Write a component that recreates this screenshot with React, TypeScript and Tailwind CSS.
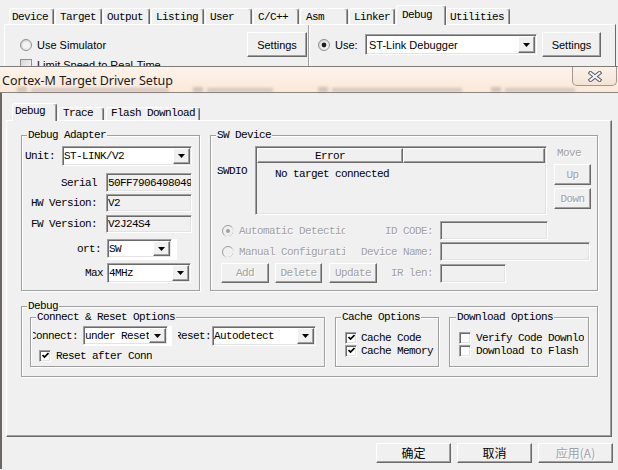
import React from 'react';

const mono = "font-['Liberation_Mono','DejaVu_Sans_Mono',monospace] text-[11px] tracking-[-0.6px] leading-[12px]";
const sans = "font-['Liberation_Sans',Arial,sans-serif] text-[11px] tracking-normal";
const cjk = "font-['Noto_Sans_CJK_SC','Noto_Sans_CJK_JP',sans-serif] text-[12px] tracking-normal leading-[16px]";

// classic 3D edges
const raised = 'border border-t-white border-l-white border-r-[#696969] border-b-[#696969] shadow-[inset_-1px_-1px_0_#a0a0a0]';
const sunken = 'border border-t-[#a0a0a0] border-l-[#a0a0a0] border-r-white border-b-white shadow-[inset_1px_1px_0_#696969,inset_-1px_-1px_0_#e3e3e3]';
const etched = 'border border-[#a0a0a0] shadow-[inset_1px_1px_0_#fff,1px_1px_0_#fff]';
const gray = 'text-[#a0a0a0] [text-shadow:1px_1px_0_#fff]';

function Group({ label, className = '', labelClass = 'ml-[5px]', children }: { label: string; className?: string; labelClass?: string; children?: React.ReactNode }) {
  return (
    <div className={`${etched} ${className}`}>
      <div className={`-mt-[7px] w-fit bg-[#f0f0f0] px-[1px] whitespace-nowrap ${labelClass}`}>{label}</div>
      {children}
    </div>
  );
}

function Arrow() {
  return (
    <svg width="7" height="4" viewBox="0 0 7 4">
      <path d="M0 0h7L3.5 4z" fill="#000" />
    </svg>
  );
}

function Combo({ value, className = '' }: { value: string; className?: string }) {
  return (
    <div className={`${sunken} bg-white p-[1px] flex items-stretch ${className}`}>
      <div className="flex-1 flex items-center overflow-hidden whitespace-nowrap">{value}</div>
      <div className={`${raised} bg-[#f0f0f0] w-[17px] flex items-center justify-center`}>
        <Arrow />
      </div>
    </div>
  );
}

function Field({ value = '', className = '' }: { value?: string; className?: string }) {
  return <div className={`${sunken} p-[1px] flex items-center overflow-hidden whitespace-nowrap ${className}`}>{value}</div>;
}

function Btn({ children, className = '', disabled }: { children: React.ReactNode; className?: string; disabled?: boolean }) {
  return (
    <div className={`${raised} bg-[#f0f0f0] flex items-center justify-center shrink-0 whitespace-nowrap ${disabled ? gray : ''} ${className}`}>
      {children}
    </div>
  );
}

function Check({ checked }: { checked?: boolean }) {
  return (
    <div className={`w-[12px] h-[12px] ${sunken} bg-white flex items-center justify-center shrink-0`}>
      {checked && (
        <svg width="7" height="7" viewBox="0 0 7 7">
          <path d="M0.5 3l2 2L6.5 1" stroke="#000" strokeWidth="1.7" fill="none" />
        </svg>
      )}
    </div>
  );
}

function Radio({ checked, disabled }: { checked?: boolean; disabled?: boolean }) {
  return (
    <svg width="12" height="12" viewBox="0 0 12 12" className="shrink-0">
      <circle cx="6" cy="6" r="5.5" fill={disabled ? '#f0f0f0' : '#fff'} stroke="#9a9a9a" />
      <path d="M10 2.5A5 5 0 0 1 2.5 10" stroke="#fff" fill="none" />
      {checked && <circle cx="6" cy="6" r="2" fill={disabled ? '#a0a0a0' : '#000'} />}
    </svg>
  );
}

function AeroRadio({ checked }: { checked?: boolean }) {
  return (
    <svg width="12" height="12" viewBox="0 0 12 12" className="shrink-0">
      <defs>
        <linearGradient id="aero" x1="0" y1="0" x2="1" y2="1">
          <stop offset="0" stopColor="#c9c9c9" />
          <stop offset="1" stopColor="#fbfbfb" />
        </linearGradient>
      </defs>
      <circle cx="6" cy="6" r="5.5" fill="url(#aero)" stroke="#8e8f8f" />
      <circle cx="6" cy="6" r="3.6" fill="#f3f3f3" />
      {checked && <circle cx="6" cy="6" r="2.4" fill="#1f1f1f" />}
    </svg>
  );
}

function Tab({ label, className, selected }: { label: string; className: string; selected?: boolean }) {
  return (
    <div
      className={`shrink-0 border-t border-l border-r border-t-white border-l-white border-r-[#696969] shadow-[inset_-1px_0_0_#a0a0a0] rounded-t-[3px] bg-[#f0f0f0] whitespace-nowrap overflow-hidden ${
        selected ? 'relative z-10 -mb-[1px]' : ''
      } ${className}`}
    >
      {label}
    </div>
  );
}

function BackWindow() {
  return (
    <div className="h-[66px] overflow-hidden">
      <div className="h-[24px] flex items-end pl-[9px]">
        <Tab label="Device" className="w-[45px] h-[16px] pl-[2px] pt-[2px]" />
        <Tab label="Target" className="ml-[1px] w-[47px] h-[16px] pl-[4px] pt-[2px]" />
        <Tab label="Output" className="ml-[1px] w-[47px] h-[16px] pl-[3px] pt-[2px]" />
        <Tab label="Listing" className="ml-[1px] w-[53px] h-[16px] pl-[4px] pt-[2px]" />
        <Tab label="User" className="ml-[1px] w-[47px] h-[16px] pl-[4px] pt-[2px]" />
        <Tab label="C/C++" className="ml-[1px] w-[46px] h-[16px] pl-[4px] pt-[2px]" />
        <Tab label="Asm" className="ml-[1px] w-[48px] h-[16px] pl-[5px] pt-[2px]" />
        <Tab label="Linker" className="ml-[1px] w-[46px] h-[16px] pl-[4px] pt-[2px]" />
        <Tab label="Debug" selected className="ml-[1px] w-[50px] h-[20px] pl-[5px] pt-[3px]" />
        <Tab label="Utilities" className="w-[64px] h-[16px] pl-[3px] pt-[2px]" />
      </div>
      <div className={`ml-[4px] mr-[2px] h-[42px] flex border-t border-l border-r border-t-white border-l-white border-r-[#696969] ${sans}`}>
        <div className="w-[304px] pl-[15px] pr-[1px] border-r border-[#a0a0a0] shadow-[1px_0_0_#fff]">
          <div className="mt-[7px] h-[25px] flex items-center">
            <AeroRadio />
            <span className="ml-[5px]">Use Simulator</span>
            <Btn className="ml-auto w-[60px] h-[25px]">Settings</Btn>
          </div>
          <div className="mt-[1px] h-[13px] flex items-center">
            <div className="w-[12px] h-[12px] border border-[#8e8f8f] bg-linear-to-br from-[#d6d6d6] to-[#fafafa]" />
            <span className="ml-[5px]">Limit Speed to Real-Time</span>
          </div>
        </div>
        <div className="flex-1 pl-[9px]">
          <div className="mt-[7px] h-[25px] flex items-center">
            <AeroRadio checked />
            <span className="ml-[5px] w-[30px]">Use:</span>
            <Combo value="ST-Link Debugger" className="w-[172px] h-[21px] pl-[3px]" />
            <Btn className="ml-[5px] w-[59px] h-[25px]">Settings</Btn>
          </div>
        </div>
      </div>
    </div>
  );
}

function TitleBar() {
  return (
    <div className="h-[26px] border-b border-[#8a8682] bg-linear-to-b from-[#fdf3ea] to-[#fbe8d8] flex flex-col">
      <div className="h-[19px] flex items-start">
        <div className="mt-[6px] pl-[2px] font-['Noto_Sans',sans-serif] text-[12.5px] leading-[16px] tracking-normal text-[#1a1a1a] whitespace-nowrap">
          Cortex-M Target Driver Setup
        </div>
        <div className="ml-auto mr-[1px] w-[45px] h-[19px] rounded-b-[5px] border border-t-0 border-[#a1978f] bg-linear-to-b from-[#fbf2ea] to-[#f4e3d4] flex items-center justify-center">
          <svg width="14" height="11" viewBox="0 0 14 11">
            <path d="M2.5 2L11.5 9M11.5 2L2.5 9" stroke="#55576a" strokeWidth="4" strokeLinecap="square" />
            <path d="M2.5 2L11.5 9M11.5 2L2.5 9" stroke="#f4f4f6" strokeWidth="2" strokeLinecap="square" />
          </svg>
        </div>
      </div>
      {/* glass: the window behind, blurred */}
      <div aria-hidden="true" className="h-[7px] overflow-hidden flex items-start opacity-30 blur-[1.5px]">
        <div className="mt-[1px] ml-[17px] w-[176px] flex items-center gap-[4px]">
          <span className="w-[10px] h-[8px] bg-[#666]" />
          <span className="w-[138px] h-[6px] bg-[#777]" />
        </div>
        <div className="mt-[1px] w-[125px] flex items-center gap-[4px]">
          <span className="w-[10px] h-[8px] bg-[#666]" />
          <span className="w-[66px] h-[6px] bg-[#777]" />
        </div>
        <div className="mt-[1px] w-[173px] flex items-center gap-[4px]">
          <span className="w-[10px] h-[8px] bg-[#666]" />
          <span className="w-[130px] h-[6px] bg-[#777]" />
        </div>
        <div className="mt-[1px] flex items-center gap-[4px]">
          <span className="w-[10px] h-[8px] bg-[#666]" />
          <span className="w-[70px] h-[6px] bg-[#777]" />
        </div>
      </div>
    </div>
  );
}

function DebugAdapter() {
  return (
    <Group label="Debug Adapter" className="w-[179px] h-[156px]">
      <div className="mt-[5px] h-[20px] flex items-center pl-[3px]">
        <span className="w-[37px]">Unit:</span>
        <Combo value="ST-LINK/V2" className="w-[130px] h-[20px]" />
      </div>
      <div className="mt-[7px] h-[19px] flex items-center">
        <span className="w-[75px] text-right">Serial</span>
        <Field value="50FF7906498049565148" className="ml-[9px] w-[86px] h-[19px]" />
      </div>
      <div className="mt-[2px] h-[18px] flex items-center">
        <span className="w-[75px] text-right">HW Version:</span>
        <Field value="V2" className="ml-[9px] w-[86px] h-[18px]" />
      </div>
      <div className="mt-[3px] h-[18px] flex items-center">
        <span className="w-[75px] text-right">FW Version:</span>
        <Field value="V2J24S4" className="ml-[9px] w-[86px] h-[18px]" />
      </div>
      <div className="mt-[6px] h-[21px] flex items-start">
        <span className="w-[79px] h-[19px] flex items-center justify-end">ort:</span>
        <div className="ml-[6px] w-[70px] h-[21px] bg-white">
          <Combo value="SW" className="w-[65px] h-[19px]" />
        </div>
      </div>
      <div className="mt-[3px] h-[20px] flex items-center">
        <span className="w-[81px] text-right">Max</span>
        <Combo value="4MHz" className="ml-[4px] w-[84px] h-[20px]" />
      </div>
    </Group>
  );
}

function SwDevice() {
  return (
    <Group label="SW Device" className="w-[388px] h-[156px]">
      <div className="mt-[5px] flex items-start">
        <div className="w-[44px] pl-[6px] pt-[19px]">SWDIO</div>
        <div className={`w-[292px] h-[69px] ${sunken} p-[1px] flex flex-col`}>
          <div className="h-[15px] flex shrink-0">
            <div className={`w-[146px] ${raised} flex items-center justify-center`}>Error</div>
            <div className={`flex-1 ${raised}`} />
          </div>
          <div className="mt-[5px] pl-[18px] whitespace-nowrap">No target connected</div>
        </div>
        <div className="ml-[7px] w-[37px] flex flex-col">
          <div className={`mt-[1px] pl-[3px] ${gray}`}>Move</div>
          <Btn disabled className="mt-[5px] h-[21px]">Up</Btn>
          <Btn disabled className="mt-[3px] h-[21px]">Down</Btn>
        </div>
      </div>
      <div className="mt-[6px] flex flex-col gap-[2px]">
        <div className="h-[19px] flex items-center">
          <div className={`w-[134px] pl-[11px] flex items-center gap-[5px] overflow-hidden whitespace-nowrap ${gray}`}>
            <Radio checked disabled />
            Automatic Detection
          </div>
          <div className={`w-[88px] text-right ${gray}`}>ID CODE:</div>
          <Field className="ml-[7px] w-[108px] h-[19px]" />
        </div>
        <div className="h-[19px] flex items-center">
          <div className={`w-[134px] pl-[11px] flex items-center gap-[5px] overflow-hidden whitespace-nowrap ${gray}`}>
            <Radio disabled />
            Manual Configuration
          </div>
          <div className={`w-[88px] text-right ${gray}`}>Device Name:</div>
          <Field className="ml-[7px] w-[150px] h-[19px]" />
        </div>
        <div className="h-[20px] flex items-center">
          <div className="w-[166px] pl-[10px] flex items-center">
            <Btn disabled className="w-[48px] h-[20px]">Add</Btn>
            <Btn disabled className="ml-[6px] w-[47px] h-[20px]">Delete</Btn>
            <Btn disabled className="ml-[7px] w-[48px] h-[20px]">Update</Btn>
          </div>
          <div className={`w-[56px] text-right ${gray}`}>IR len:</div>
          <Field className="ml-[7px] w-[66px] h-[19px]" />
        </div>
      </div>
    </Group>
  );
}

function DebugOptions() {
  return (
    <Group label="Debug" className="mt-[15px] w-[577px] h-[71px]">
      <div className="mt-[5px] pl-[8px] flex items-start gap-[10px]">
        <Group label="Connect & Reset Options" className="w-[295px] h-[50px]">
          <div className="mt-[3px] h-[20px] flex items-center">
            <div className="ml-[2px] w-[47px] pr-[2px] flex justify-end overflow-hidden whitespace-nowrap">Connect:</div>
            <div className="ml-[3px] w-[89px] h-[20px] bg-white">
              <Combo value="under Reset" className="w-[85px] h-[19px]" />
            </div>
            <div className="ml-[6px] w-[33px] flex justify-end overflow-hidden whitespace-nowrap">Reset:</div>
            <Combo value="Autodetect" className="ml-[1px] w-[104px] h-[20px]" />
          </div>
          <div className="mt-[3px] pl-[8px] h-[13px] flex items-center gap-[5px]">
            <Check checked />
            <div className="w-[96px] overflow-hidden whitespace-nowrap">Reset after Connect</div>
          </div>
        </Group>
        <Group label="Cache Options" className="w-[104px] h-[50px]">
          <div className="mt-[8px] pl-[9px] flex flex-col">
            <div className="h-[13px] flex items-center gap-[4px] whitespace-nowrap">
              <Check checked />
              Cache Code
            </div>
            <div className="h-[13px] flex items-center gap-[4px] whitespace-nowrap">
              <Check checked />
              Cache Memory
            </div>
          </div>
        </Group>
        <Group label="Download Options" labelClass="ml-[6px]" className="w-[140px] h-[50px]">
          <div className="mt-[8px] pl-[9px] flex flex-col">
            <div className="h-[13px] flex items-center gap-[5px]">
              <Check />
              <div className="w-[108px] overflow-hidden whitespace-nowrap">Verify Code Download</div>
            </div>
            <div className="h-[13px] flex items-center gap-[5px] whitespace-nowrap">
              <Check />
              Download to Flash
            </div>
          </div>
        </Group>
      </div>
    </Group>
  );
}

export default function App() {
  return (
    <div className={`w-[618px] h-[470px] overflow-hidden bg-[#f0f0f0] text-black ${mono}`}>
      <BackWindow />
      <div className="border-t border-[#7f7b78]">
        <TitleBar />
        <div className="h-[376px] border-l-2 border-[#6c6762]">
          <div className="h-[27px] flex items-end pl-[10px]">
            <Tab label="Debug" selected className="w-[45px] h-[18px] pl-[2px] pt-[1px]" />
            <Tab label="Trace" className="ml-[1px] w-[46px] h-[13px] pl-[4px] leading-[10px]" />
            <Tab label="Flash Download" className="ml-[2px] w-[94px] h-[13px] pl-[4px] leading-[10px]" />
          </div>
          <div className={`ml-[4px] w-[606px] h-[317px] ${raised} pl-[14px] pt-[14px]`}>
            <div className="flex gap-[10px]">
              <DebugAdapter />
              <SwDevice />
            </div>
            <DebugOptions />
          </div>
          <div className={`mt-[6px] flex justify-end gap-[6px] pr-[5px] ${cjk}`}>
            <Btn className="w-[75px] h-[20px]">确定</Btn>
            <Btn className="w-[75px] h-[20px]">取消</Btn>
            <Btn disabled className="w-[75px] h-[20px]">应用(A)</Btn>
          </div>
        </div>
      </div>
    </div>
  );
}
